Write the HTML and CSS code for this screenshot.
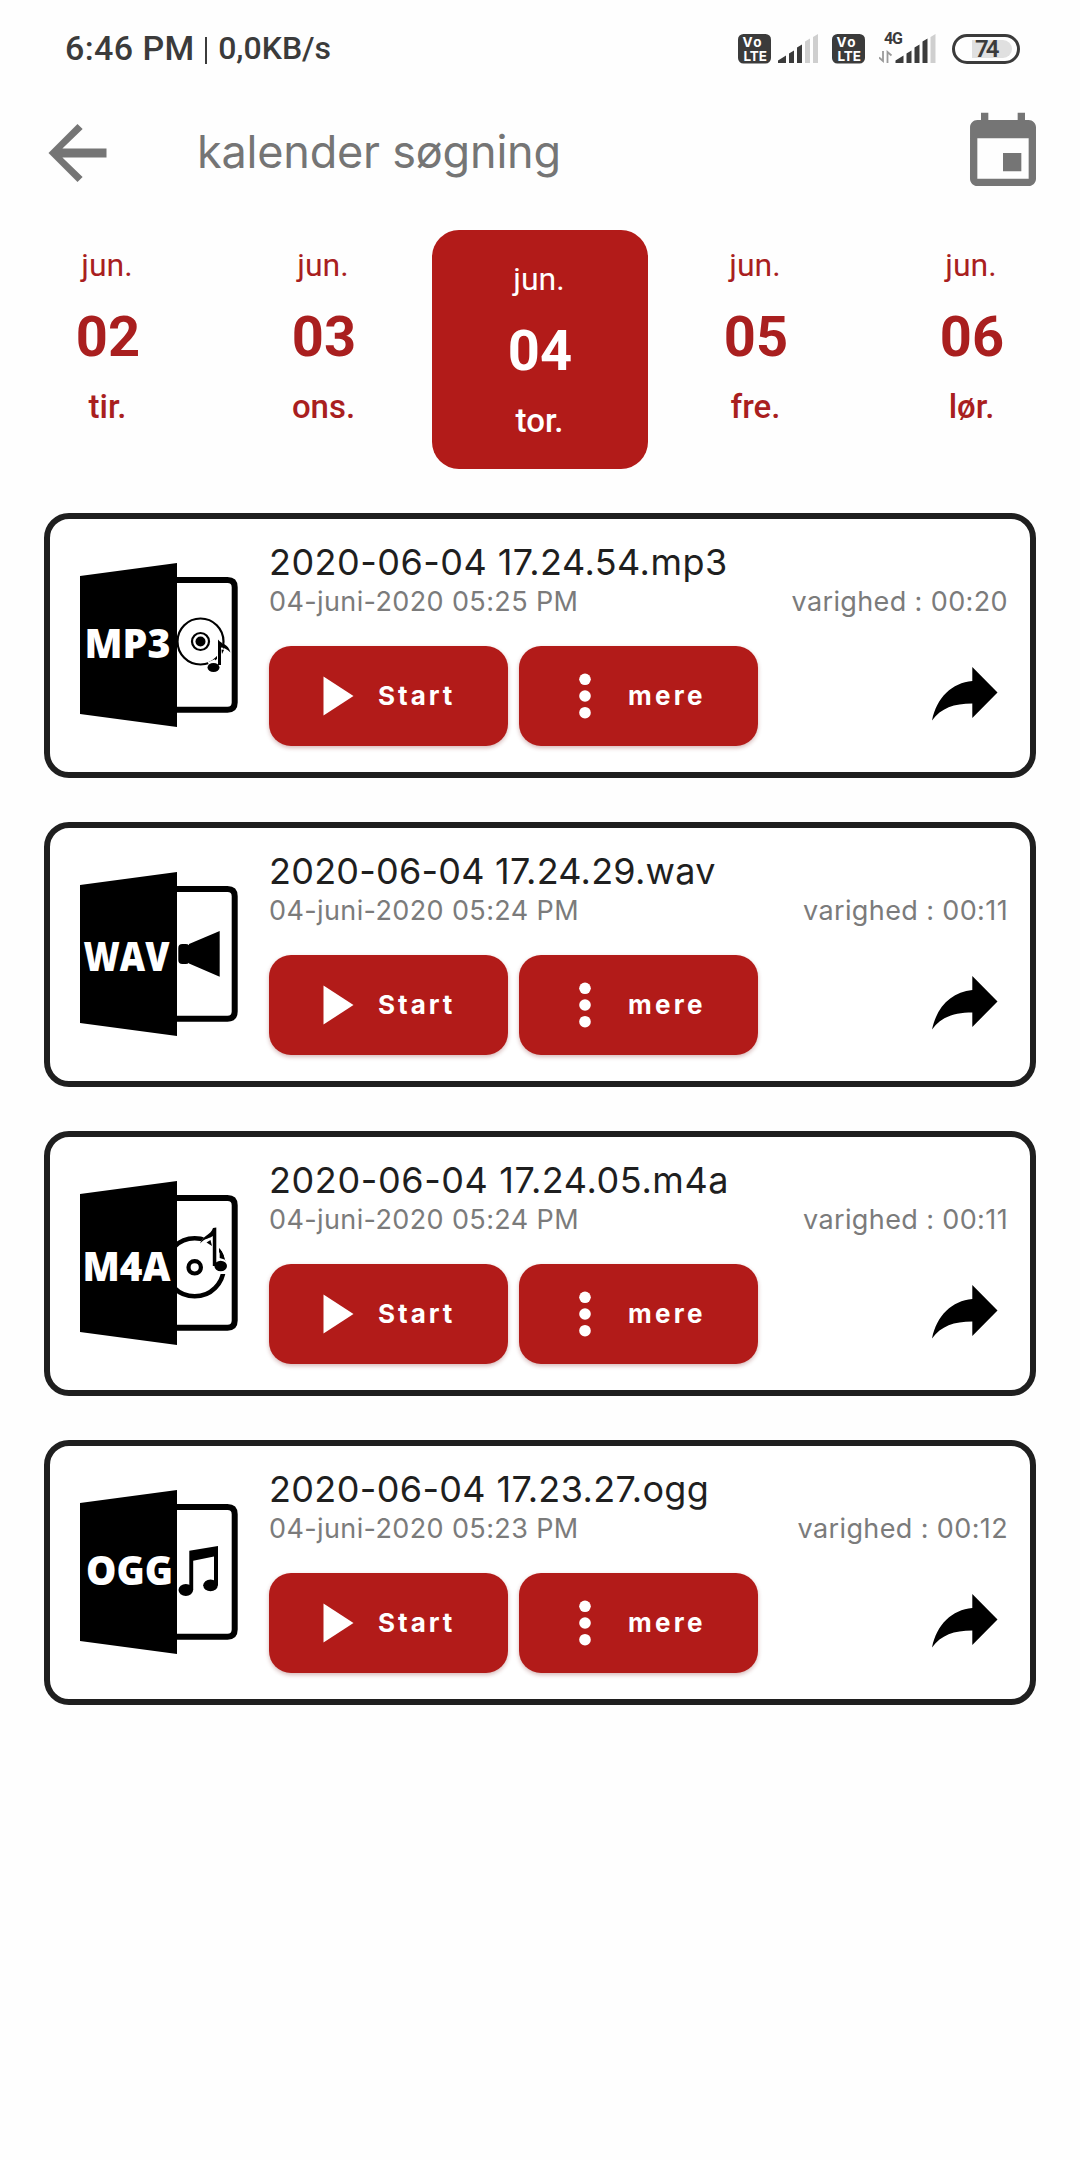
FILE: index.html
```
<!DOCTYPE html>
<html lang="da">
<head>
<meta charset="utf-8">
<title>kalender søgning</title>
<link rel="stylesheet" href="styles.css">
</head>
<body>
<svg class="defs" aria-hidden="true">
  <symbol id="door" viewBox="0 0 158 164">
    <path d="M90 17H147.500Q154.700 17 154.700 24.200V139.500Q154.700 146.700 147.500 146.700H90" fill="none" stroke="#000" stroke-width="6"/>
    <path d="M0 13L97 0V164L0 151Z"/>
  </symbol>
  <symbol id="play" viewBox="0 0 31 40"><path d="M.5 .5L30.500 20L.5 39.500Z" fill="#fff"/></symbol>
  <symbol id="dots" viewBox="0 0 12 46"><g fill="#fff"><circle cx="6" cy="6.300" r="5.800"/><circle cx="6" cy="23" r="5.800"/><circle cx="6" cy="39.700" r="5.800"/></g></symbol>
  <symbol id="share" viewBox="0 0 66 54"><path d="M65.500 25.500L40.300 0V14C20 16 5 30 0 53.500C9 41 22 36.500 40.300 36.500V51Z"/></symbol>
</svg>

<header class="status">
  <div class="status-left"><span class="clock">6:46 PM</span><span class="divider"></span><span class="speed">0,0KB/s</span></div>
  <div class="status-right">
    <svg class="volte" width="33" height="30" viewBox="0 0 33 30">
      <rect width="33" height="29.500" rx="5.500" fill="#3b3b3b"/>
      <text x="4.500" y="13" class="volte-text" textLength="19">Vo</text>
      <text x="5.500" y="26.500" class="volte-text" textLength="23.500">LTE</text>
    </svg>
    <svg class="signal" width="41" height="30" viewBox="0 0 41 30">
      <path fill="#3b3b3b" d="M0 29V26.500L8 21.500V29ZM11 29V19.500L16 16.500V29ZM19 29V13.500L24 10.500V29Z"/>
      <path fill="#cfcfcf" d="M27 29V7.500L32 4.500V29ZM35 29V3L40 0V29Z"/>
    </svg>
    <svg class="volte" width="33" height="30" viewBox="0 0 33 30">
      <rect width="33" height="29.500" rx="5.500" fill="#3b3b3b"/>
      <text x="4.500" y="13" class="volte-text" textLength="19">Vo</text>
      <text x="5.500" y="26.500" class="volte-text" textLength="23.500">LTE</text>
    </svg>
    <svg class="signal-4g" width="57" height="38" viewBox="0 -6 57 38">
      <text x="5" y="12" class="net" textLength="19">4G</text>
      <path d="M4 19V29L0 25.500M8.500 31V20L12.500 23.500" fill="none" stroke="#9a9a9a" stroke-width="1.800"/>
      <path fill="#3b3b3b" d="M16.500 31V28.500L24.500 23.500V31ZM27.500 31V21.500L32.500 18.500V31ZM35.500 31V15.500L40.500 12.500V31ZM43.500 31V9.500L48.500 6.500V31Z"/>
      <path fill="#cfcfcf" d="M51.500 31V5L56.500 2V31Z"/>
    </svg>
    <div class="battery"><span class="battery-value">74</span></div>
  </div>
</header>

<nav class="topbar">
  <svg class="topicon back" viewBox="0 0 24 24"><path d="M20 10.750H7.830l5.590-5.340L12 4l-8 8 8 8 1.410-1.410L7.830 13.250H20v-2.500z"/></svg>
  <h1 class="title">kalender søgning</h1>
  <svg class="topicon" viewBox="0 0 24 24"><path d="M17 12h-5v5h5v-5zM16 1v2H8V1H6v2H5c-1.110 0-1.990.9-1.990 2L3 19c0 1.100.89 2 2 2h14c1.100 0 2-.9 2-2V5c0-1.100-.9-2-2-2h-1V1h-2zm3 18H5V8h14v11z"/></svg>
</nav>

<section class="days">
  <div class="day"><span class="month">jun.</span><span class="num">02</span><span class="weekday">tir.</span></div>
  <div class="day"><span class="month">jun.</span><span class="num">03</span><span class="weekday">ons.</span></div>
  <div class="day selected"><span class="month">jun.</span><span class="num">04</span><span class="weekday">tor.</span></div>
  <div class="day"><span class="month">jun.</span><span class="num">05</span><span class="weekday">fre.</span></div>
  <div class="day"><span class="month">jun.</span><span class="num">06</span><span class="weekday">lør.</span></div>
</section>

<main class="list">
  <article class="card">
    <svg class="file" viewBox="0 0 158 164">
      <use href="#door"/>
      <text class="ext" x="4.500" y="94.500" textLength="86" lengthAdjust="spacingAndGlyphs">MP3</text>
      <circle cx="120.500" cy="78.500" r="23" fill="#fff" stroke="#000" stroke-width="2.200"/>
      <circle cx="120.500" cy="78.500" r="8.500" fill="none" stroke="#000" stroke-width="2.200"/>
      <circle cx="120.500" cy="78.500" r="5"/>
      <path d="M140 80V103M129 102L136 99" stroke="#fff" stroke-width="6"/>
      <path d="M138 76.500C142 82 148 80 150.500 89.500C147 86 143.500 84.500 141 84.500V102H138Z"/>
      <path d="M141.500 86.500L144 87L142 91Z"/>
      <ellipse cx="133.500" cy="104.500" rx="6" ry="4.600"/>
    </svg>
    <div class="info">
      <h2 class="name">2020-06-04 17.24.54.mp3</h2>
      <div class="meta"><span>04-juni-2020 05:25 PM</span><span>varighed : 00:20</span></div>
      <div class="actions">
        <button class="btn"><svg class="play"><use href="#play"/></svg>Start</button>
        <button class="btn more"><svg class="dots"><use href="#dots"/></svg>mere</button>
        <svg class="share"><use href="#share"/></svg>
      </div>
    </div>
  </article>

  <article class="card">
    <svg class="file" viewBox="0 0 158 164">
      <use href="#door"/>
      <text class="ext" x="3.500" y="98.500" textLength="86" lengthAdjust="spacingAndGlyphs">WAV</text>
      <rect x="98.300" y="72" width="11.500" height="20" rx="4"/>
      <path d="M109 72L139.700 59V104.700L109 91.500Z"/>
    </svg>
    <div class="info">
      <h2 class="name tight">2020-06-04 17.24.29.wav</h2>
      <div class="meta"><span>04-juni-2020 05:24 PM</span><span>varighed : 00:11</span></div>
      <div class="actions">
        <button class="btn"><svg class="play"><use href="#play"/></svg>Start</button>
        <button class="btn more"><svg class="dots"><use href="#dots"/></svg>mere</button>
        <svg class="share"><use href="#share"/></svg>
      </div>
    </div>
  </article>

  <article class="card">
    <svg class="file" viewBox="0 0 158 164">
      <circle cx="114.700" cy="86.300" r="29" fill="none" stroke="#000" stroke-width="4.600"/>
      <circle cx="114.700" cy="86.300" r="6.200" fill="none" stroke="#000" stroke-width="4.200"/>
      <path d="M119 63L127 52L135 47L139 60V71L150 86V93H139L132 84V68L124 66Z" fill="#fff"/>
      <path d="M139.700 68C142.500 71 144 74 144.500 78.500L139.700 77Z"/>
      <path d="M120 62.500C123 54 131 54 133 47L136.300 46.500V85H132.800V55C130 57.500 125 57 120 62.500Z"/>
      <path d="M126.500 61.500L130.500 59L132 65Z"/>
      <ellipse cx="140.700" cy="85" rx="6.300" ry="5.300"/>
      <use href="#door"/>
      <text class="ext" x="2.500" y="99.500" textLength="88" lengthAdjust="spacingAndGlyphs">M4A</text>
    </svg>
    <div class="info">
      <h2 class="name wide">2020-06-04 17.24.05.m4a</h2>
      <div class="meta"><span>04-juni-2020 05:24 PM</span><span>varighed : 00:11</span></div>
      <div class="actions">
        <button class="btn"><svg class="play"><use href="#play"/></svg>Start</button>
        <button class="btn more"><svg class="dots"><use href="#dots"/></svg>mere</button>
        <svg class="share"><use href="#share"/></svg>
      </div>
    </div>
  </article>

  <article class="card">
    <svg class="file" viewBox="0 0 158 164">
      <use href="#door"/>
      <text class="ext" x="6" y="94.500" textLength="87" lengthAdjust="spacingAndGlyphs">OGG</text>
      <path d="M109.300 60.700L138 56V95H134V66.500L113.200 70.700V100H109.300Z"/>
      <ellipse cx="105.800" cy="100" rx="7.300" ry="5.900"/>
      <ellipse cx="130.500" cy="95.300" rx="7.300" ry="5.900"/>
    </svg>
    <div class="info">
      <h2 class="name snug">2020-06-04 17.23.27.ogg</h2>
      <div class="meta"><span>04-juni-2020 05:23 PM</span><span>varighed : 00:12</span></div>
      <div class="actions">
        <button class="btn"><svg class="play"><use href="#play"/></svg>Start</button>
        <button class="btn more"><svg class="dots"><use href="#dots"/></svg>mere</button>
        <svg class="share"><use href="#share"/></svg>
      </div>
    </div>
  </article>
</main>
</body>
</html>
```
FILE: styles.css
```
* { box-sizing: border-box; }
body {
  margin: 0;
  min-height: 2160px;
  background: #fefefe;
  font-family: Inter, "Liberation Sans", sans-serif;
}
svg { display: block; flex: none; }
.defs { position: absolute; width: 0; height: 0; }

.status {
  display: flex;
  justify-content: space-between;
  align-items: center;
  height: 97px;
  padding: 0 60px 0 65px;
  color: #3b3b3b;
  font-family: Roboto, sans-serif;
  font-weight: 500;
}
.status-left { display: flex; align-items: center; }
.clock { font-size: 34px; letter-spacing: .4px; line-height: 97px; }
.divider { width: 2.5px; height: 27px; margin: 4px 11px 0 10px; background: #3b3b3b; }
.speed { font-size: 32px; line-height: 97px; }
.status-right { display: flex; align-items: center; }
.volte-text { font: 700 13.5px Inter, sans-serif; fill: #fff; }
.net { font: 700 16px Roboto, sans-serif; fill: #3b3b3b; }
.signal { margin: 0 13px 0 7px; }
.signal-4g { margin: -8px 16px 0 14.500px; }
.battery {
  width: 68px;
  height: 30px;
  padding: 3px 5px 3px 17px;
  border: 3px solid #3b3b3b;
  border-radius: 15px;
}
.battery-value {
  display: block;
  height: 18px;
  padding-left: 3px;
  border-radius: 0 9px 9px 0;
  background: #e0e0e0;
  font-size: 24px;
  letter-spacing: -3px;
  line-height: 19px;
  font-weight: 600;
}

.topbar {
  display: flex;
  align-items: center;
  height: 88px;
  margin: 12px 33px 0 34px;
}
.topicon { width: 88px; height: 88px; fill: #757575; }
.back { width: 87px; }
.title {
  flex: 1;
  margin: 0;
  padding: 0 0 2px 76px;
  font-size: 45px;
  font-weight: 400;
  line-height: 60px;
  letter-spacing: -.2px;
  color: #757575;
}

.days {
  display: grid;
  grid-template-columns: repeat(5, 216px);
  height: 239px;
  margin-top: 33px;
  color: #a91f1f;
  font-family: Roboto, sans-serif;
  text-align: center;
}
.day { display: flex; flex-direction: column; padding-top: 16px; }
.month { padding-right: 2px; font-size: 32px; line-height: 38px; }
.num { margin: 20px 0 18px; font-size: 56px; font-weight: 700; line-height: 66px; }
.weekday { padding-right: 1px; font-size: 33px; font-weight: 500; line-height: 38px; }
.selected { padding-top: 30px; border-radius: 27px; background: #b21b19; color: #fff; }

.list { display: flex; flex-direction: column; gap: 44px; padding: 44px 44px 0; }
.card {
  display: flex;
  gap: 31px;
  height: 265px;
  padding: 21px 22px 0 30px;
  border: 6px solid #1f1f1f;
  border-radius: 25px;
  background: #fff;
}
.file { width: 158px; height: 164px; margin-top: 23px; }
.ext { font: 800 41px "Open Sans", sans-serif; fill: #fff; }
.info { flex: 1; }
.name {
  margin: 0;
  font-size: 36px;
  font-weight: 400;
  line-height: 44px;
  letter-spacing: .47px;
  color: #1f1f1f;
}
.name.tight { letter-spacing: .23px; }
.name.wide { letter-spacing: .6px; }
.name.snug { letter-spacing: .35px; }
.meta {
  display: flex;
  justify-content: space-between;
  margin-top: 1px;
  font-size: 27px;
  line-height: 34px;
  letter-spacing: .38px;
  color: #7b7b7b;
}
.actions { display: flex; align-items: center; margin-top: 27px; }
.btn {
  display: flex;
  align-items: center;
  gap: 24px;
  width: 239px;
  height: 100px;
  margin: 0 11px 0 0;
  padding: 0 0 0 54px;
  border: 0;
  border-radius: 22px;
  background: #b21b19;
  box-shadow: 0 2px 4px rgba(120, 20, 20, .3);
  color: #fff;
  font: 700 26px/32px Inter, sans-serif;
  letter-spacing: 3px;
}
.btn.more { gap: 37px; padding-left: 60px; letter-spacing: 3.3px; }
.play { width: 31px; height: 40px; }
.dots { width: 12px; height: 46px; }
.share { width: 66px; height: 54px; margin: 0 10px 4px auto; }
```
